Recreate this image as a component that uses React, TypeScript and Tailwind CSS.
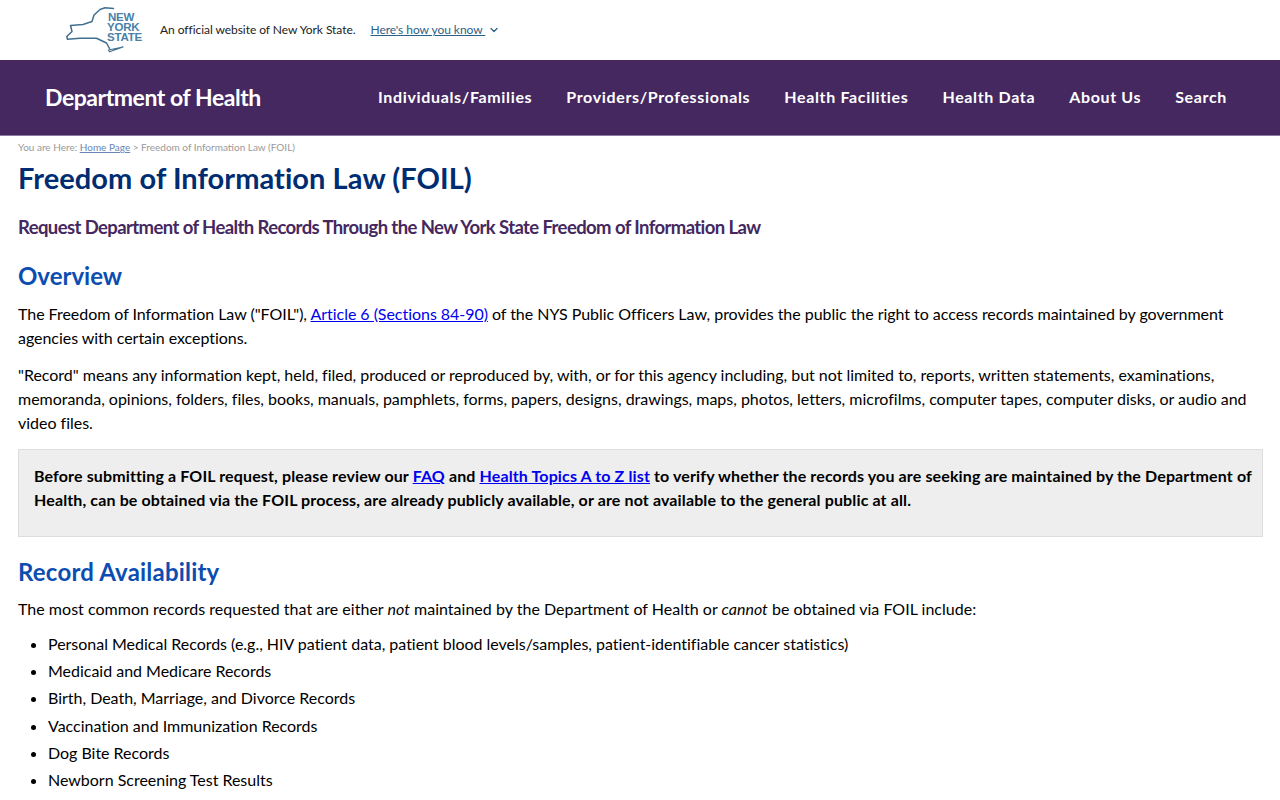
import React from "react";
import { ChevronDown } from "lucide-react";

const sans = "font-['Lato',sans-serif]";

function Logo() {
  return (
    <div className="relative w-[76px] h-[46px] shrink-0">
      <svg width="76" height="46" viewBox="0 0 76 46" fill="none" className="absolute left-0 top-0">
        <path d="M47.5 1.5 L39 0.8 L34 2.5 L28 8 L26 14.5 L17 17.5 L4.5 18.5 L6 24.5 L0.8 29.5 L1.5 32.2 L14 31.2 L30.5 31.2 L40.5 36 L43.5 41.5" stroke="#41708f" strokeWidth="1.5" strokeLinejoin="round" strokeLinecap="round" />
        <path d="M42.5 43 L57 40 L43.5 44.7 Z" stroke="#41708f" strokeWidth="1.2" strokeLinejoin="round" />
      </svg>
      <div className="absolute left-[41px] top-[5px] text-[#4a7fa8] font-bold text-[11.5px] leading-[10px] font-['Liberation_Sans',sans-serif] tracking-[-0.2px]">
        <div className="pl-[1px]">NEW</div>
        <div>YORK</div>
        <div>STATE</div>
      </div>
    </div>
  );
}

export default function App() {
  return (
    <div className={`${sans} bg-white text-black overflow-hidden h-[800px]`}>
      <div className="h-[60px] flex items-center pl-[66px] bg-white">
        <Logo />
        <span className="ml-[18px] text-[12px] text-[#222] tracking-[-0.05px]">An official website of New York State.</span>
        <span className="ml-[15px] text-[12px] text-[#2b5f86] underline whitespace-pre tracking-[-0.05px]">Here's how you know </span>
        <ChevronDown size={12} strokeWidth={2.5} className="ml-[3px] text-[#2b5f86]" />
      </div>

      <div className="h-[76px] bg-[#452860] border-b border-[#8d7aa0] flex items-center justify-between pl-[45px] pr-[53px]">
        <span className="text-white text-[23px] font-bold tracking-[-0.45px]">Department of Health</span>
        <nav className="flex gap-[34px] text-white text-[16px] font-bold tracking-[0.65px] pb-[2px]">
          <span>Individuals/Families</span>
          <span>Providers/Professionals</span>
          <span>Health Facilities</span>
          <span>Health Data</span>
          <span>About Us</span>
          <span>Search</span>
        </nav>
      </div>

      <main className="pl-[18px] pr-[17px] text-[16px] leading-[24px]">
        <div className="pt-[5px] text-[10px] leading-[12px] text-[#999]">
          You are Here: <span className="underline text-[#6a86b5]">Home Page</span> &gt; Freedom of Information Law (FOIL)
        </div>
        <h1 className="mt-[7px] text-[29px] leading-[36px] font-bold text-[#002d72] tracking-[0.06px]">Freedom of Information Law (FOIL)</h1>
        <h2 className="mt-[19px] text-[18.5px] leading-[24px] font-bold text-[#452860] tracking-[-0.6px]">Request Department of Health Records Through the New York State Freedom of Information Law</h2>
        <h3 className="mt-[22px] text-[24px] leading-[30px] font-bold text-[#0b4db0]">Overview</h3>
        <p className="mt-[11px] tracking-[-0.04px]">The Freedom of Information Law ("FOIL"), <a className="underline text-[#0000ee]">Article 6 (Sections 84-90)</a> of the NYS Public Officers Law, provides the public the right to access records maintained by government agencies with certain exceptions.</p>
        <p className="mt-[13px] tracking-[-0.02px]">"Record" means any information kept, held, filed, produced or reproduced by, with, or for this agency including, but not limited to, reports, written statements, examinations, memoranda, opinions, folders, files, books, manuals, pamphlets, forms, papers, designs, drawings, maps, photos, letters, microfilms, computer tapes, computer disks, or audio and video files.</p>
        <div className="mt-[14px] h-[88px] bg-[#eeeeee] border border-[#dddddd] pl-[15px] pr-[4px] pt-[14px] font-bold tracking-[0.13px]">
          Before submitting a FOIL request, please review our <a className="underline text-[#0000ee]">FAQ</a> and <a className="underline text-[#0000ee]">Health Topics A to Z list</a> to verify whether the records you are seeking are maintained by the Department of Health, can be obtained via the FOIL process, are already publicly available, or are not available to the general public at all.
        </div>
        <h3 className="mt-[20px] text-[24px] leading-[30px] font-bold text-[#0b4db0] tracking-[0.2px]">Record Availability</h3>
        <p className="mt-[10px] tracking-[0.02px]">The most common records requested that are either <em>not</em> maintained by the Department of Health or <em>cannot</em> be obtained via FOIL include:</p>
        <ul className="mt-[11px] list-disc pl-[30px] tracking-[-0.015px]">
          <li className="mb-[3.2px]">Personal Medical Records (e.g., HIV patient data, patient blood levels/samples, patient-identifiable cancer statistics)</li>
          <li className="mb-[3.2px]">Medicaid and Medicare Records</li>
          <li className="mb-[3.2px]">Birth, Death, Marriage, and Divorce Records</li>
          <li className="mb-[3.2px]">Vaccination and Immunization Records</li>
          <li className="mb-[3.2px]">Dog Bite Records</li>
          <li className="mb-[3.2px]">Newborn Screening Test Results</li>
        </ul>
      </main>
    </div>
  );
}
